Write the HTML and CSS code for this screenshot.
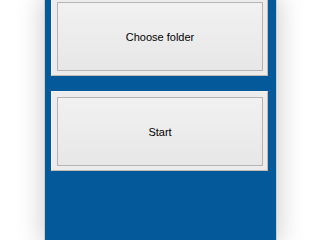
FILE: index.html
```html
<!DOCTYPE html>
<html>
<head>
<meta charset="utf-8">
<link rel="stylesheet" href="styles.css">
</head>
<body>
<div class="window">
  <div class="btn"><div class="btn-face">Choose folder</div></div>
  <div class="btn"><div class="btn-face">Start</div></div>
</div>
</body>
</html>
```
FILE: styles.css
```css
html, body {
  margin: 0;
  padding: 0;
  background: #ffffff;
  overflow: hidden;
}
.window {
  margin-left: 44px;
  margin-top: -5px;
  height: calc(100vh + 10px);
  border: 1px solid #cdcdcd;
  border-bottom: 0;
  background: #03599a;
  box-shadow: 0 0 26px rgba(0, 0, 0, 0.22);
  box-sizing: content-box;
  padding: 0 8px 0 6px;
  width: 217px;
  display: flex;
  flex-direction: column;
  gap: 15px;
}
.btn {
  height: 80px;
  flex: none;
  box-sizing: border-box;
  border: 1px solid;
  border-color: #f2f2f2 #c2bbb4 #c2bbb4 #f2f2f2;
  background: #ececec;
  padding: 5px 4px 4px 5px;
  display: flex;
}
.btn-face {
  flex: 1;
  border: 1px solid #b5b5b5;
  background: linear-gradient(#f1f1f1, #e7e7e7);
  display: flex;
  align-items: center;
  justify-content: center;
  font-family: "Liberation Sans", Arial, sans-serif;
  font-size: 11px;
  color: #000000;
}
```
